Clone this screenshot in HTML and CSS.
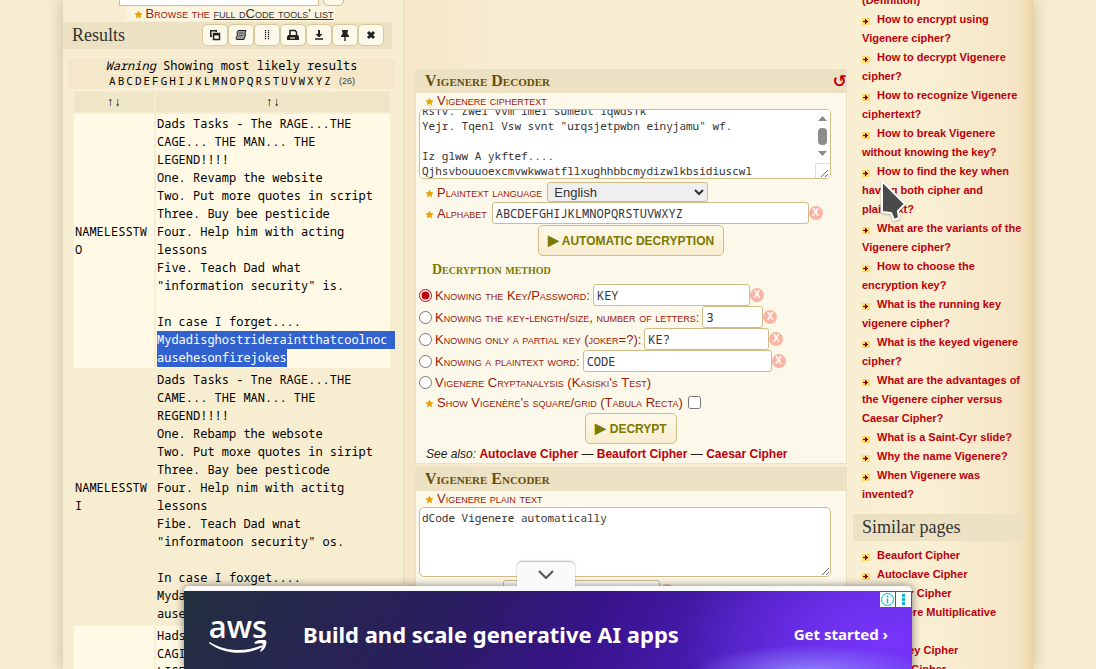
FILE: index.html
```html
<!DOCTYPE html>
<html lang="en">
<head>
    <meta charset="UTF-8">
    <meta name="viewport" content="width=device-width, initial-scale=1.0">
    <title>Vigenere Cipher - Online Decoder, Encoder, Solver</title>
    <link rel="stylesheet" href="styles.css">
</head>
<body>
    <svg class="sprites" aria-hidden="true">
        <symbol id="star" viewBox="0 0 20 20">
            <path d="M10 1l2.800 5.800 6.200.9-4.500 4.500 1.100 6.300L10 15.500 4.400 18.500l1.100-6.300L1 7.700l6.200-.9z" fill="#e8a400"/>
        </symbol>
        <symbol id="plus" viewBox="0 0 8 7">
            <rect width="8" height="7" fill="#fbd96b"/>
            <path d="M1 3h2V1h1v1h1v1h1v1H5v1H4v1H3V4H1z" fill="#8b0000"/>
        </symbol>
    </svg>

    <div class="page">
        <aside class="left">
            <form class="search">
                <input type="text" class="search-box" aria-label="Search for a tool">
                <button type="button" class="search-btn" aria-label="Search"></button>
            </form>
            <p class="browse"><span><svg class="star"><use href="#star"/></svg>Browse the <a href="#">full dCode tools' list</a></span></p>

            <div class="side-title results-title">
                <h2>Results</h2>
                <div class="tools">
                    <button type="button" aria-label="Copy"><svg viewBox="0 0 12 12"><path d="M1 1h7v2H3v5H1z" fill="#222"/><path d="M2.500 2.500h4v4h-4z" fill="#fdf9ea"/><rect x="4.500" y="4.500" width="6" height="6" fill="#fdf9ea" stroke="#222" stroke-width="1.500"/><path d="M4 4h7v2.500H4z" fill="#222"/></svg></button>
                    <button type="button" aria-label="Copy as text"><svg viewBox="0 0 12 12"><path d="M3 1.500h8l-1 2.500.5 2-1.500 4.500H1.500L1 9l1.500-3L2 4z" fill="#999" stroke="#222"/><path d="M4 4h4M4 6.500h4" stroke="#555"/></svg></button>
                    <button type="button" aria-label="Columns"><svg viewBox="0 0 12 12"><path d="M4.500 1v10M7.500 1v10" stroke="#111" stroke-width="1.200" stroke-dasharray="1.300 .7"/></svg></button>
                    <button type="button" aria-label="Print"><svg viewBox="0 0 12 12"><path d="M3 6V1.500h5L9.500 3v3" fill="none" stroke="#222" stroke-width="1.500"/><path d="M1 6h10l1 2v3H0V8z" fill="#222"/><path d="M3 9h5" stroke="#fff"/></svg></button>
                    <button type="button" aria-label="Download"><svg viewBox="0 0 12 12"><path d="M5 1h2v4h2.500L6 8.500 2.500 5H5z" fill="#222"/><path d="M2 10h8" stroke="#222" stroke-width="1.500"/></svg></button>
                    <button type="button" aria-label="Pin"><svg viewBox="0 0 12 12"><path d="M3 1h6v1.500H8.500V5L10 7v1H6.700v4H5.300V8H2V7l1.500-2V2.500H3z" fill="#222"/></svg></button>
                    <button type="button" aria-label="Close"><svg viewBox="0 0 12 12"><path d="M3 3l6 6M9 3l-6 6" stroke="#222" stroke-width="3"/></svg></button>
                </div>
            </div>

            <div class="warning">
                <p><em>Warning</em> Showing most likely results</p>
                <p class="letters"></p>
            </div>

            <table class="results">
                <thead>
                    <tr><th>↑↓</th><th>↑↓</th></tr>
                </thead>
                <tbody>
                    <tr>
                        <td>NAMELESSTWO</td>
                        <td>Dads Tasks - The RAGE...THE CAGE... THE MAN... THE LEGEND!!!!
One. Revamp the website
Two. Put more quotes in script
Three. Buy bee pesticide
Four. Help him with acting lessons
Five. Teach Dad what "information security" is.

In case I forget....
<mark><span class="sel-line">Mydadisghostrideraintthatcoolnoc</span><span class="sel-end">ausehesonfirejokes</span></mark></td>
                    </tr>
                    <tr>
                        <td>NAMELESSTWI</td>
                        <td>Dads Tasks - Tne RAGE...THE CAME... THE MAN... THE REGEND!!!!
One. Rebamp the websote
Two. Put moxe quotes in siript
Three. Bay bee pesticode
Four. Help nim with actitg lessons
Fibe. Teach Dad wnat "informatoon security" os.

In case I foxget....
Mydadisghostrideraintthatcoolnocausehesonfirejokes</td>
                    </tr>
                    <tr>
                        <td></td>
                        <td>Hads Tasks - The RAGE...THE CAGI... THE MAN... THE LISEND!!!!</td>
                    </tr>
                </tbody>
            </table>
        </aside>

        <main class="center">
            <section class="tool decoder">
                <h2>Vigenere Decoder <button type="button" class="reset" aria-label="Reset">↺</button></h2>
                <form>
                    <label class="field-label" for="ciphertext"><svg class="star"><use href="#star"/></svg>Vigenere ciphertext</label>
                    <div class="cipher-wrap">
                        <textarea id="ciphertext" class="cipher">Dvlr. Tqenl Vsw amel
Rsfv. Zwel vvm imel sumebt lqwdsfk
Yejr. Tqenl Vsw svnt "urqsjetpwbn einyjamu" wf.

Iz glww A ykftef....
Qjhsvbouuoexcmvwkwwatfllxughhbbcmydizwlkbsidiuscwl</textarea>
                        <svg class="scrollbar" viewBox="0 0 15 68" aria-hidden="true">
                            <path d="M0 0h15v68H0z" fill="#fff"/>
                            <path d="M3 11l4.500-5 4.500 5zM3 41l4.500 5 4.500-5z" fill="#8b8b8b"/>
                            <rect x="3" y="18" width="9" height="17" rx="4" fill="#8b8b8b"/>
                            <path d="M.5 68V53.500H15" fill="none" stroke="#ddd"/>
                            <path d="M6 67l7-7M10 67l3-3" stroke="#666"/>
                        </svg>
                    </div>
                    <div class="row row-select">
                        <label for="lang"><svg class="star"><use href="#star"/></svg>Plaintext language</label>
                        <select id="lang"><option>English</option></select>
                    </div>
                    <div class="row">
                        <label for="alphabet"><svg class="star"><use href="#star"/></svg>Alphabet</label>
                        <input type="text" id="alphabet" class="w-alphabet" value="ABCDEFGHIJKLMNOPQRSTUVWXYZ"><button type="button" class="clear">X</button>
                    </div>
                    <button type="button" class="submit"><span>▶</span> AUTOMATIC DECRYPTION</button>

                    <h3>Decryption method</h3>
                    <div class="row option">
                        <input type="radio" name="method" id="m1" checked>
                        <label for="m1">Knowing the Key/Password:</label>
                        <input type="text" class="w-key" value="KEY" aria-label="Key"><button type="button" class="clear">X</button>
                    </div>
                    <div class="row option">
                        <input type="radio" name="method" id="m2">
                        <label for="m2">Knowing the key-length/size, number of letters:</label>
                        <input type="text" class="w-length" value="3" aria-label="Key length"><button type="button" class="clear">X</button>
                    </div>
                    <div class="row option">
                        <input type="radio" name="method" id="m3">
                        <label for="m3">Knowing only a partial key (joker=?):</label>
                        <input type="text" class="w-partial" value="KE?" aria-label="Partial key"><button type="button" class="clear">X</button>
                    </div>
                    <div class="row option">
                        <input type="radio" name="method" id="m4">
                        <label for="m4">Knowing a plaintext word:</label>
                        <input type="text" class="w-word" value="CODE" aria-label="Plaintext word"><button type="button" class="clear">X</button>
                    </div>
                    <div class="row option short">
                        <input type="radio" name="method" id="m5">
                        <label for="m5">Vigenere Cryptanalysis (Kasiski's Test)</label>
                    </div>
                    <div class="row short">
                        <label for="grid"><svg class="star"><use href="#star"/></svg>Show Vigenère's square/grid (Tabula Recta)</label>
                        <input type="checkbox" id="grid">
                    </div>
                    <button type="button" class="submit"><span>▶</span> DECRYPT</button>
                    <p class="see-also"><em>See also:</em> <a href="#">Autoclave Cipher</a> — <a href="#">Beaufort Cipher</a> — <a href="#">Caesar Cipher</a></p>
                </form>
            </section>

            <section class="tool">
                <h2>Vigenere Encoder</h2>
                <form>
                    <label class="field-label" for="plain"><svg class="star"><use href="#star"/></svg>Vigenere plain text</label>
                    <textarea id="plain">dCode Vigenere automatically</textarea>
                    <div class="row row-key">
                        <label for="cipherkey"><svg class="star"><use href="#star"/></svg>Cipher Key</label>
                        <input type="text" id="cipherkey" class="w-key" value="KEY"><button type="button" class="clear">X</button>
                    </div>
                </form>
            </section>
        </main>

        <aside class="right">
            <ul class="links questions">
                <li><a href="#"><svg class="plus"><use href="#plus"/></svg>What is Vigenere? (Definition)</a></li>
                <li><a href="#"><svg class="plus"><use href="#plus"/></svg>How to encrypt using Vigenere cipher?</a></li>
                <li><a href="#"><svg class="plus"><use href="#plus"/></svg>How to decrypt Vigenere cipher?</a></li>
                <li><a href="#"><svg class="plus"><use href="#plus"/></svg>How to recognize Vigenere ciphertext?</a></li>
                <li><a href="#"><svg class="plus"><use href="#plus"/></svg>How to break Vigenere without knowing the key?</a></li>
                <li><a href="#"><svg class="plus"><use href="#plus"/></svg>How to find the key when having both cipher and plaintext?</a></li>
                <li><a href="#"><svg class="plus"><use href="#plus"/></svg>What are the variants of the Vigenere cipher?</a></li>
                <li><a href="#"><svg class="plus"><use href="#plus"/></svg>How to choose the encryption key?</a></li>
                <li><a href="#"><svg class="plus"><use href="#plus"/></svg>What is the running key vigenere cipher?</a></li>
                <li><a href="#"><svg class="plus"><use href="#plus"/></svg>What is the keyed vigenere cipher?</a></li>
                <li><a href="#"><svg class="plus"><use href="#plus"/></svg>What are the advantages of the Vigenere cipher versus Caesar Cipher?</a></li>
                <li><a href="#"><svg class="plus"><use href="#plus"/></svg>What is a Saint-Cyr slide?</a></li>
                <li><a href="#"><svg class="plus"><use href="#plus"/></svg>Why the name Vigenere?</a></li>
                <li><a href="#"><svg class="plus"><use href="#plus"/></svg>When Vigenere was invented?</a></li>
            </ul>
            <h2 class="side-title">Similar pages</h2>
            <ul class="links">
                <li><a href="#"><svg class="plus"><use href="#plus"/></svg>Beaufort Cipher</a></li>
                <li><a href="#"><svg class="plus"><use href="#plus"/></svg>Autoclave Cipher</a></li>
                <li><a href="#"><svg class="plus"><use href="#plus"/></svg>Caesar Cipher</a></li>
                <li><a href="#"><svg class="plus"><use href="#plus"/></svg>Vigenere Multiplicative Cipher</a></li>
                <li><a href="#"><svg class="plus"><use href="#plus"/></svg>Autokey Cipher</a></li>
                <li><a href="#"><svg class="plus"><use href="#plus"/></svg>Affine Cipher</a></li>
            </ul>
        </aside>
    </div>

    <!-- Sticky ad -->
    <div class="ad">
        <button type="button" class="ad-toggle" aria-label="Collapse"><svg viewBox="0 0 16 10"><path d="M1 1l7 7 7-7" fill="none" stroke="#555" stroke-width="2"/></svg></button>
        <a href="#" class="ad-body">
            <span class="aws">aws<svg viewBox="0 0 62 17"><path d="M1 2c16 10 37 11 54 4 2-1 3 1 1 2C39 17 16 15 1 4c-1-1-1-2 0-2z" fill="#fff"/><path d="M49 2c4-3 11-3 12-1s-1 9-5 11c-1 1-2 0-1-1 1-2 3-6 2-7s-5 0-7 0-2-1-1-2z" fill="#fff"/></svg></span>
            <span class="ad-text">Build and scale generative AI apps</span>
            <span class="ad-cta">Get started ›</span>
        </a>
        <div class="ad-badges">
            <svg viewBox="0 0 15 15"><circle cx="7.500" cy="7.500" r="6" fill="none" stroke="#17b3cb"/><path d="M7.500 6.500v5M7.500 3.500v2" stroke="#17b3cb" stroke-width="1.500"/></svg>
            <svg viewBox="0 0 15 15"><path d="M6 2h3v3H6zM6 6h3v3H6zM6 10h3v3H6z" fill="#17b3cb"/></svg>
        </div>
    </div>

    <svg class="cursor" viewBox="0 0 28 44" aria-hidden="true"><path d="M2 2v31l9 1 3 7 5-2-1-7 7-7z" fill="#4a4a4a" stroke="#fff" stroke-width="2" stroke-linejoin="round"/></svg>

    <script>
        // One boxed cell per letter of the alphabet
        const letters = document.querySelector('.letters');
        [...'ABCDEFGHIJKLMNOPQRSTUVWXYZ'].forEach(c => {
            const cell = document.createElement('span');
            cell.textContent = c;
            letters.append(cell);
        });
        const count = document.createElement('small');
        count.textContent = '(26)';
        letters.append(count);

        document.querySelector('.cipher').scrollTop = 24;
    </script>
</body>
</html>
```
FILE: styles.css
```css
* {
    box-sizing: border-box;
}

body {
    margin: 0;
    height: 100vh;
    overflow: hidden;
    background: #f7edd0;
    color: #222;
    font-family: "Liberation Sans", Arial, sans-serif;
    font-size: 12px;
}

h2, h3, p, ul {
    margin: 0;
    padding: 0;
}

button, input, select, textarea {
    font: inherit;
    color: #333;
    margin: 0;
}

a {
    color: #bd000c;
    font-weight: bold;
    text-decoration: none;
}

.sprites {
    display: none;
}

.star {
    width: 9px;
    height: 9px;
    margin-right: 3px;
    vertical-align: -1px;
}

.page {
    display: grid;
    grid-template-columns: 341px 1fr 183px;
    width: calc(100% - 126px);
    max-width: 1200px;
    height: 100vh;
    margin: 0 auto;
    overflow: hidden;
    background: linear-gradient(90deg, #f5e6c8 340px, #f8ecd0 440px, #f9efd3 90%, #f5e5c5 98%, #f3e1bd 99%, #ead3a2);
    box-shadow: 0 0 16px rgba(90, 70, 30, 0.3);
}

/* Left column */
.left {
    background: #f7edd1;
    border-right: 1px solid #ead9b2;
}

.search {
    display: flex;
    justify-content: center;
    gap: 4px;
    height: 6px;
    padding-right: 4px;
    align-items: flex-end;
}

.search-box {
    width: 200px;
    height: 26px;
    border: 1px solid #d0bc88;
    background: #fff;
}

.search-btn {
    width: 21px;
    height: 26px;
    border: 1px solid #d0bc88;
    border-radius: 5px;
    background: #fdf9ea;
}

.browse {
    padding-right: 4px;
    text-align: center;
    font-variant: small-caps;
    font-size: 13px;
    line-height: 16px;
    color: #9a1a0c;
}

.browse span {
    padding: 0 2px 0 7px;
    background: #fbf4df;
}

.browse a {
    color: #333;
    font-weight: normal;
    text-decoration: underline;
}

.side-title {
    height: 27px;
    padding: 0 9px;
    background: #ece1c2;
    font-family: "Liberation Serif", serif;
    font-weight: normal;
    font-size: 18px;
    line-height: 26px;
    color: #333;
}

.results-title {
    display: flex;
    justify-content: space-between;
    align-items: center;
    margin-right: 11px;
    padding: 0 8px 1px 9px;
}

.results-title h2 {
    font: inherit;
}

.tools {
    display: flex;
}

.tools button {
    display: flex;
    align-items: center;
    justify-content: center;
    width: 26px;
    height: 22px;
    padding: 0;
    border: 1px solid #d9c899;
    border-radius: 5px;
    background: #fdf9ea;
}

.tools svg {
    width: 12px;
    height: 12px;
}

.warning {
    margin: 8px 8px 0 5px;
    border: solid #fbf3df;
    border-width: 1px 0;
    background: #f5e7c9;
    text-align: center;
    font: 12px/15px "Noto Sans Mono", "DejaVu Sans Mono", monospace;
    color: #000;
}

.letters {
    display: flex;
    justify-content: center;
    height: 16px;
    font-size: 11px;
    line-height: 16px;
}

.letters span {
    padding: 0 1px;
    border: solid #fbf3df;
    border-width: 1px 0;
    line-height: 14px;
}

.letters small {
    margin-left: 7px;
    font-size: 9px;
    font-family: "Liberation Sans", sans-serif;
    color: #444;
}

.results {
    width: calc(100% - 20px);
    margin-left: 9px;
    border-spacing: 2px;
    table-layout: fixed;
    font: 12px/18px "Noto Sans Mono", "DejaVu Sans Mono", monospace;
    color: #000;
}

.results th {
    height: 20px;
    padding: 0;
    background: #efe5c7;
    font-weight: normal;
}

.results th:first-child {
    width: 80px;
}

.results td {
    padding: 1px;
    white-space: pre-wrap;
    overflow-wrap: anywhere;
}

.results tbody tr:nth-child(odd) td {
    background: #fff9e6;
}

.results mark {
    background: none;
    color: #fff;
}

.sel-line,
.sel-end {
    display: inline-block;
    background: #3162cf;
    vertical-align: top;
}

.sel-line {
    box-shadow: 8px 0 #3162cf;
}

/* Middle column */
.center {
    padding: 69px 3px 0 11px;
}

.tool {
    margin-bottom: 3px;
    border: 1px solid #ece1c2;
    background: #fdf9ea;
}

.tool h2 {
    display: flex;
    justify-content: space-between;
    height: 24px;
    margin: -1px -1px 0;
    padding-left: 10px;
    background: #ece1c2;
    font: small-caps bold 16px/23px "Liberation Serif", serif;
    color: #66500d;
}

.reset {
    padding: 0;
    border: 0;
    background: none;
    font: bold 17px/22px "DejaVu Sans", sans-serif;
    color: #bd000c;
}

.tool form {
    padding: 0 3px;
}

.tool label {
    font-variant: small-caps;
    font-size: 13px;
    color: #9a1a0c;
}

.field-label {
    display: block;
    height: 16px;
    padding-left: 6px;
    line-height: 16px;
}

textarea {
    display: block;
    width: 100%;
    height: 70px;
    padding: 2px;
    border: 1px solid #d0bc88;
    border-radius: 5px;
    background: #fff;
    font: 11px/15px "Noto Sans Mono", "DejaVu Sans Mono", monospace;
}

.cipher-wrap,
#plain {
    width: calc(100% - 12px);
}

.cipher-wrap {
    position: relative;
}

/* Scrollbar lies over the text box */
.scrollbar {
    position: absolute;
    top: 1px;
    right: 1px;
    width: 15px;
    height: 68px;
    border-radius: 0 4px 4px 0;
    pointer-events: none;
}

.row {
    display: flex;
    align-items: center;
    gap: 5px;
    height: 22px;
    padding-left: 6px;
}

.row-select {
    margin-top: 3px;
    height: 20px;
}

.row-key {
    margin-top: 3px;
}

.row.option {
    gap: 3px;
    padding-left: 0;
}

.row.short {
    height: 20px;
}

.row input[type="text"] {
    height: 22px;
    padding: 1px 3px;
    border: 1px solid #d0bc88;
    border-radius: 3px;
    background: #fff;
    font: 12px "Noto Sans Mono", "DejaVu Sans Mono", monospace;
}

.row select {
    width: 161px;
    height: 20px;
    padding: 0 2px;
    border: 1px solid #d0bc88;
    border-radius: 3px;
    background-color: #efefef;
    font-size: 13px;
}

.w-alphabet {
    width: 317px;
}

.w-key {
    width: 157px;
}

.w-length {
    width: 61px;
}

.w-partial {
    width: 125px;
}

.w-word {
    width: 189px;
}

input[type="radio"],
input[type="checkbox"] {
    width: 13px;
    height: 13px;
    accent-color: #bd000c;
}

.clear {
    width: 14px;
    height: 14px;
    margin-left: -5px;
    padding: 0;
    border: 0;
    border-radius: 50%;
    background: #f8b5a5;
    color: #fff;
    font-weight: bold;
    font-size: 10px;
    line-height: 14px;
}

.option .clear {
    margin-left: -3px;
}

.submit {
    display: block;
    height: 31px;
    margin: 1px auto 0;
    padding: 0 9px 2px;
    border: 1px solid #d0bc88;
    border-radius: 5px;
    background: linear-gradient(#fdf9ea, #f8edd0);
    color: #7a7a00;
    font-weight: bold;
}

.submit span {
    font-size: 14px;
}

.tool h3 {
    padding: 5px 0 5px 13px;
    font: small-caps bold 14px/18px "Liberation Serif", serif;
    color: #7a7a00;
}

.see-also {
    padding: 3px 6px 2px 7px;
    line-height: 14px;
}

/* Right column */
.right {
    padding: 0 10px 0 3px;
    font-size: 11px;
}

.links {
    padding: 5px 0 0 9px;
    list-style: none;
    line-height: 19px;
}

.questions {
    margin-top: -33px;
    padding-bottom: 10px;
}

.plus {
    width: 8px;
    height: 7px;
    margin-right: 7px;
    vertical-align: -2px;
}

/* Sticky ad */
.ad {
    position: fixed;
    bottom: 0;
    left: 50%;
    width: 728px;
    margin-left: -364px;
    padding-top: 5px;
    border-radius: 5px 5px 0 0;
    background: #fafafa;
    box-shadow: 0 0 8px rgba(0, 0, 0, 0.5);
}

.ad-toggle {
    position: absolute;
    top: -24px;
    left: 50%;
    width: 58px;
    height: 27px;
    margin-left: -31px;
    border: 0;
    border-radius: 5px 5px 0 0;
    background: #fafafa;
    box-shadow: 0 -1px 2px rgba(0, 0, 0, 0.3);
}

.ad-toggle svg {
    width: 16px;
    height: 10px;
}

.ad-body {
    display: flex;
    align-items: center;
    height: 78px;
    padding: 8px 24px 0;
    background:
        radial-gradient(ellipse 120px 28px at 86% 105%, #8f82fc, transparent),
        radial-gradient(ellipse 200px 110px at 96% 60%, #7634f8, transparent),
        linear-gradient(120deg, #232f3e, #2a1d60 36%, #371389 55%, #5020c4 80%, #6a30f0);
    color: #fff;
    font-family: "Noto Sans", sans-serif;
}

.aws {
    display: flex;
    flex-direction: column;
    align-items: center;
    width: 60px;
    font: 600 31px/27px "Open Sans", sans-serif;
}

.aws svg {
    width: 60px;
    height: 16px;
}

.ad-text {
    flex: 1;
    margin-left: 35px;
    font-size: 22px;
}

.ad-cta {
    font-size: 15px;
}

.ad-badges {
    position: absolute;
    top: 6px;
    right: 1px;
    display: flex;
    gap: 1px;
}

.ad-badges svg {
    width: 15px;
    height: 15px;
    background: #fff;
}

/* Mouse pointer lies over the page */
.cursor {
    position: absolute;
    top: 179px;
    left: 880px;
    width: 28px;
    height: 44px;
    filter: drop-shadow(0 1px 1px rgba(0, 0, 0, 0.3));
}
```
